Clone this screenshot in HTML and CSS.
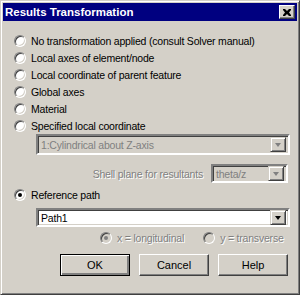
FILE: index.html
```html
<!DOCTYPE html>
<html lang="en">
<head>
    <meta charset="UTF-8">
    <title>Results Transformation</title>
    <link rel="stylesheet" href="styles.css">
</head>
<body>

<div class="window">
    <div class="titlebar">
        <span class="title">Results Transformation</span>
        <span class="close">
            <svg width="8" height="7" viewBox="0 0 8 7"><path d="M0 0h2l2 2 2-2h2v1l-2 2.5 2 2.5v1h-2l-2-2-2 2h-2v-1l2-2.5-2-2.5z" fill="#000"/></svg>
        </span>
    </div>

    <div class="content">
        <div class="option"><span class="radio"></span>No transformation applied (consult Solver manual)</div>
        <div class="option"><span class="radio"></span>Local axes of element/node</div>
        <div class="option"><span class="radio"></span>Local coordinate of parent feature</div>
        <div class="option"><span class="radio"></span>Global axes</div>
        <div class="option"><span class="radio"></span>Material</div>
        <div class="option"><span class="radio"></span>Specified local coordinate</div>

        <div class="combo disabled wide">
            <span class="combo-text">1:Cylindrical about Z-axis</span>
            <span class="combo-btn"><i class="arrow"></i></span>
        </div>

        <div class="shell-row">
            <span class="muted">Shell plane for resultants</span>
            <div class="combo disabled small">
                <span class="combo-text">theta/z</span>
                <span class="combo-btn"><i class="arrow"></i></span>
            </div>
        </div>

        <div class="option"><span class="radio checked"></span>Reference path</div>

        <div class="combo wide path">
            <span class="combo-text">Path1</span>
            <span class="combo-btn"><i class="arrow"></i></span>
        </div>

        <div class="axis-row">
            <span class="axis"><span class="radio checked disabled"></span>x = longitudinal</span>
            <span class="axis"><span class="radio disabled"></span>y = transverse</span>
        </div>

        <div class="buttons">
            <button class="btn default">OK</button>
            <button class="btn">Cancel</button>
            <button class="btn">Help</button>
        </div>
    </div>
</div>

</body>
</html>
```

FILE: styles.css
```css
html, body {
    margin: 0;
    padding: 0;
}
body {
    width: 300px;
    height: 295px;
    background-color: #d4d0c8;
    font-family: "Liberation Sans", Arial, sans-serif;
    font-size: 10.5px;
    letter-spacing: -0.2px;
    color: #000;
}
.window {
    box-sizing: border-box;
    width: 300px;
    height: 295px;
    border: 1px solid;
    border-color: #d4d0c8 #404040 #404040 #d4d0c8;
    box-shadow: inset 1px 1px #fff, inset -1px -1px #808080;
    padding: 2px;
    background-color: #d4d0c8;
}
.titlebar {
    height: 18px;
    background-color: #000080;
    display: flex;
    align-items: center;
    justify-content: space-between;
    padding: 0 2px 0 2px;
}
.title {
    color: #fff;
    font-weight: bold;
    font-size: 11.5px;
    letter-spacing: 0;
}
.close {
    box-sizing: border-box;
    width: 16px;
    height: 14px;
    background-color: #d4d0c8;
    border: 1px solid;
    border-color: #fff #404040 #404040 #fff;
    box-shadow: inset -1px -1px #808080;
    display: flex;
    align-items: center;
    justify-content: center;
}

.content {
    padding: 11px 9px 0 11px;
}
.option {
    height: 17px;
    display: flex;
    align-items: center;
    white-space: nowrap;
}
.radio {
    box-sizing: border-box;
    width: 12px;
    height: 12px;
    border-radius: 50%;
    border: 1px solid;
    border-color: #808080 #fff #fff #808080;
    box-shadow: inset 1px 1px #404040, inset -1px -1px #d4d0c8;
    background-color: #fff;
    margin-right: 5px;
    flex: none;
    display: flex;
    align-items: center;
    justify-content: center;
}
.radio.checked::after {
    content: "";
    width: 4px;
    height: 4px;
    border-radius: 50%;
    background-color: #000;
}
.radio.disabled {
    background-color: #d4d0c8;
}
.radio.disabled.checked::after {
    background-color: #808080;
}

.combo {
    box-sizing: border-box;
    height: 21px;
    border: 2px solid;
    border-color: #808080 #fff #fff #808080;
    box-shadow: inset 1px 1px #404040, inset -1px -1px #d4d0c8;
    background-color: #fff;
    display: flex;
    align-items: center;
    padding: 2px;
    white-space: nowrap;
}
.combo.wide {
    margin-left: 22px;
    width: 254px;
}
.combo.disabled {
    background-color: #d4d0c8;
    color: #808080;
}
.combo-text {
    flex: 1;
    padding-left: 1px;
}
.combo-btn {
    box-sizing: border-box;
    width: 16px;
    height: 15px;
    background-color: #d4d0c8;
    border: 1px solid;
    border-color: #d4d0c8 #404040 #404040 #d4d0c8;
    box-shadow: inset 1px 1px #fff, inset -1px -1px #808080;
    display: flex;
    align-items: center;
    justify-content: center;
}
.arrow {
    width: 0;
    height: 0;
    border-left: 3.5px solid transparent;
    border-right: 3.5px solid transparent;
    border-top: 4px solid #000;
}
.disabled .arrow {
    border-top-color: #808080;
}

.shell-row {
    display: flex;
    justify-content: flex-end;
    align-items: center;
    margin-top: 9px;
    height: 19px;
    white-space: nowrap;
}
.muted {
    color: #808080;
    text-shadow: 1px 1px #fff;
    margin-right: 8px;
}
.combo.small {
    width: 77px;
    height: 19px;
}
.shell-row + .option {
    margin-top: 3px;
}
.combo.path {
    margin-top: 5px;
    height: 19px;
}
.axis-row {
    display: flex;
    height: 17px;
    align-items: center;
    margin-top: 2px;
    padding-left: 86px;
    color: #808080;
    white-space: nowrap;
}
.axis {
    display: flex;
    align-items: center;
    text-shadow: 1px 1px #fff;
}
.axis + .axis {
    margin-left: 19px;
}
.buttons {
    display: flex;
    justify-content: flex-end;
    gap: 9px;
    margin-top: 8px;
}
.btn {
    box-sizing: border-box;
    width: 70px;
    height: 22px;
    font-family: inherit;
    font-size: 11px;
    letter-spacing: 0;
    background-color: #d4d0c8;
    border: 1px solid;
    border-color: #fff #404040 #404040 #fff;
    box-shadow: inset -1px -1px #808080;
    padding: 0;
}
.btn.default {
    border: 1px solid #000;
    box-shadow: inset 1px 1px #fff, inset -2px -2px #808080, inset -1px -1px #404040;
}
```
